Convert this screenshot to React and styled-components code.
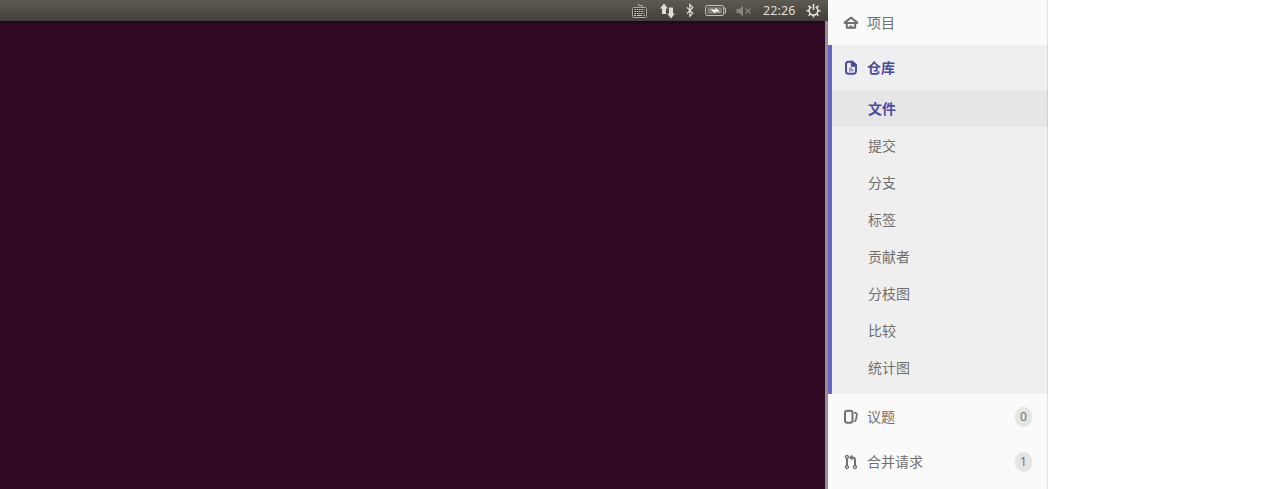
import React from 'react';
import styled, { createGlobalStyle } from 'styled-components';

const GlobalStyle = createGlobalStyle`
  * { box-sizing: border-box; }
  body { margin: 0; background: #fff; overflow: hidden; }
`;

const Page = styled.main`
  display: flex;
  width: 1287px;
  height: 489px;
  background: #fff;
  font-family: "Noto Sans", "Noto Sans CJK SC", sans-serif;
`;

const Desktop = styled.section`
  display: flex;
  flex-direction: column;
  width: 828px;
`;

const TopBar = styled.header`
  display: flex;
  align-items: flex-start;
  justify-content: flex-end;
  height: 21px;
  padding-right: 7px;
  background: linear-gradient(#5c5a50, #403f3a);
`;

const TrayIcon = styled.svg`
  flex: none;
  width: ${(p) => p.$w}px;
  height: 21px;
  margin-right: ${(p) => p.$gap || 0}px;
  overflow: visible;
`;

const Clock = styled.time`
  width: 34px;
  margin-right: 9px;
  font: 12.5px/21px "Noto Sans", sans-serif;
  letter-spacing: 0.1px;
  color: #e3dfd5;
  white-space: nowrap;
`;

const Wallpaper = styled.div`
  flex: 1;
  border-right: 3px solid #998d91;
  background: linear-gradient(#1d0717, #300a24 4px);
`;

const Sidebar = styled.nav`
  width: 220px;
  background: #fafafa;
  box-shadow: inset -1px 0 0 #e1e1e1;
`;

const Group = styled.div`
  height: 349px;
  background: #efefef;
  box-shadow: inset 4px 0 0 #6666c4, inset -1px 0 0 #d9d9d9;
`;

const Item = styled.a`
  display: flex;
  align-items: center;
  height: 45px;
  padding: 0 16px 0 15px;
  font-size: 14px;
  line-height: 20px;
  font-weight: ${(p) => (p.$active ? 700 : 400)};
  color: ${(p) => (p.$active ? '#4b4ba3' : '#707070')};
`;

const ItemIcon = styled.svg`
  flex: none;
  width: 16px;
  height: 16px;
  margin-right: 8px;
`;

const SubItem = styled.a`
  display: flex;
  align-items: center;
  height: 37px;
  padding-left: 36px;
  margin-left: 4px;
  font-size: 14px;
  line-height: 20px;
  font-weight: ${(p) => (p.$active ? 700 : 400)};
  color: ${(p) => (p.$active ? '#4b4ba3' : '#707070')};
  background: ${(p) => (p.$active ? 'rgba(0, 0, 0, 0.037)' : 'transparent')};
`;

const Badge = styled.span`
  width: 17px;
  height: 20px;
  margin-left: auto;
  border-radius: 9px;
  background: #e5e5e5;
  font-size: 12px;
  line-height: 20px;
  text-align: center;
  color: #707070;
`;

const links = ['文件', '提交', '分支', '标签', '贡献者', '分枝图', '比较', '统计图'];

function Tray() {
  return (
    <TopBar>
      <TrayIcon $w={16} $gap={12} viewBox="0 0 16 21" fill="none" stroke="#aaa79d">
        <path d="M6.5 3.5v2h4V8" />
        <rect x="0.5" y="7.5" width="14" height="10" rx="1" fill="#3d3c37" />
        <path d="M2.5 9.5h10M2.5 11.5h10M2.5 13.5h10" stroke="#d4d0c6" strokeDasharray="1.5 .8" />
        <path d="M2 15.5h2M5 15.5h5M11.5 15.5h1.5" stroke="#d4d0c6" />
      </TrayIcon>
      <TrayIcon $w={15} $gap={11} viewBox="0 0 15 21" fill="#dfdbd2">
        <path d="M4 3.5 8 8.5H6v5.5H2V8.5H0zM11 18.5l-4-5h2V7.5h4v6h2z" />
      </TrayIcon>
      <TrayIcon $w={8} $gap={11} viewBox="0 0 8 21" fill="none" stroke="#dfdbd2" strokeWidth="1.2">
        <path d="m.8 7.3 6 6-3 3V4.5l3 3-6 6.2" />
      </TrayIcon>
      <TrayIcon $w={21} $gap={10} viewBox="0 0 21 21" fill="none">
        <rect x="0.6" y="5.5" width="18" height="10" rx="1.5" stroke="#c4c1b8" />
        <path d="M19.3 8h1.2v5h-1.2" stroke="#c4c1b8" />
        <rect x="2.5" y="7.3" width="14.2" height="6.4" fill="#85827a" />
        <path d="m5.5 9 4.7 1.1.7-2.3 4.1 4.7-4.2-1.2-.8 2.2z" fill="#fffdf5" />
      </TrayIcon>
      <TrayIcon $w={16} $gap={11} viewBox="0 0 16 21" fill="#85837b">
        <path d="M.5 9H3l4-3.5v11L3 13H.5z" />
        <path d="m9.5 8.5 5 5M14.5 8.5l-5 5" stroke="#85837b" strokeWidth="1.4" />
      </TrayIcon>
      <Clock>22:26</Clock>
      <TrayIcon $w={15} viewBox="0 0 15 21" fill="none" stroke="#e3dfd5">
        <path d="M5.3 6.9a4.4 4.4 0 1 0 4.4 0" strokeWidth="1.6" />
        <path d="M7.5 4v6" strokeWidth="1.6" />
        <path d="M.5 10.8H3M12 10.8h2.5M2.5 5.8l1.6 1.6M12.5 5.8l-1.6 1.6M2.5 15.8l1.6-1.6M12.5 15.8l-1.6-1.6M7.5 15v2.5" strokeWidth="1.6" />
      </TrayIcon>
    </TopBar>
  );
}

export default function App() {
  return (
    <Page>
      <GlobalStyle />
      <Desktop>
        <Tray />
        <Wallpaper />
      </Desktop>
      <Sidebar>
        <Item>
          <ItemIcon viewBox="0 0 16 16" fill="none" stroke="#707070" strokeWidth="2" strokeLinecap="round" strokeLinejoin="round">
            <path d="M1.7 7.6 8 2.6l6.3 5M3.8 8v4.8h8.4V8" />
            <path d="M2 8h12" strokeWidth="1.8" />
            <path d="M7 13v-2h2v2" strokeWidth="1.2" />
          </ItemIcon>
          <span>项目</span>
        </Item>
        <Group>
          <Item $active>
            <ItemIcon viewBox="0 0 16 16" fill="none" stroke="#4b4ba3" strokeWidth="2">
              <path d="M9 1.7H5.5A2.5 2.5 0 0 0 3 4.2v7a2.5 2.5 0 0 0 2.5 2.5h5a2.5 2.5 0 0 0 2.5-2.5V6z" />
              <path d="M8.3 1.3v5h5.2V4.8L10 1.3z" fill="#4b4ba3" strokeWidth="1" />
              <path d="M6 7.5h3V9h1.5v2.5H6z" fill="#9696cb" stroke="none" />
            </ItemIcon>
            <span>仓库</span>
          </Item>
          {links.map((label, i) => (
            <SubItem key={label} $active={i === 0}>{label}</SubItem>
          ))}
        </Group>
        <Item>
          <ItemIcon viewBox="0 0 16 16" fill="none" stroke="#707070" strokeWidth="2">
            <rect x="2" y="1.7" width="7.5" height="12" rx="2.3" />
            <path d="M11.2 3.7c2.5.2 2.9 1.2 2.5 3l-.7 3.7c-.3 1.2-.8 1.8-1.7 2.2" strokeWidth="1.8" />
          </ItemIcon>
          <span>议题</span>
          <Badge>0</Badge>
        </Item>
        <Item>
          <ItemIcon viewBox="0 0 16 16" fill="none" stroke="#707070" strokeWidth="1.3">
            <circle cx="4" cy="3" r="1.5" />
            <circle cx="4" cy="13" r="1.5" />
            <circle cx="12" cy="13" r="1.5" />
            <path d="M4 4.5v7M8 3.5h1.5C11.3 3.5 12 4.2 12 6v5.5" strokeWidth="2" />
            <path d="M9.3.5v6L6 3.5z" fill="#707070" stroke="none" />
          </ItemIcon>
          <span>合并请求</span>
          <Badge>1</Badge>
        </Item>
      </Sidebar>
    </Page>
  );
}
